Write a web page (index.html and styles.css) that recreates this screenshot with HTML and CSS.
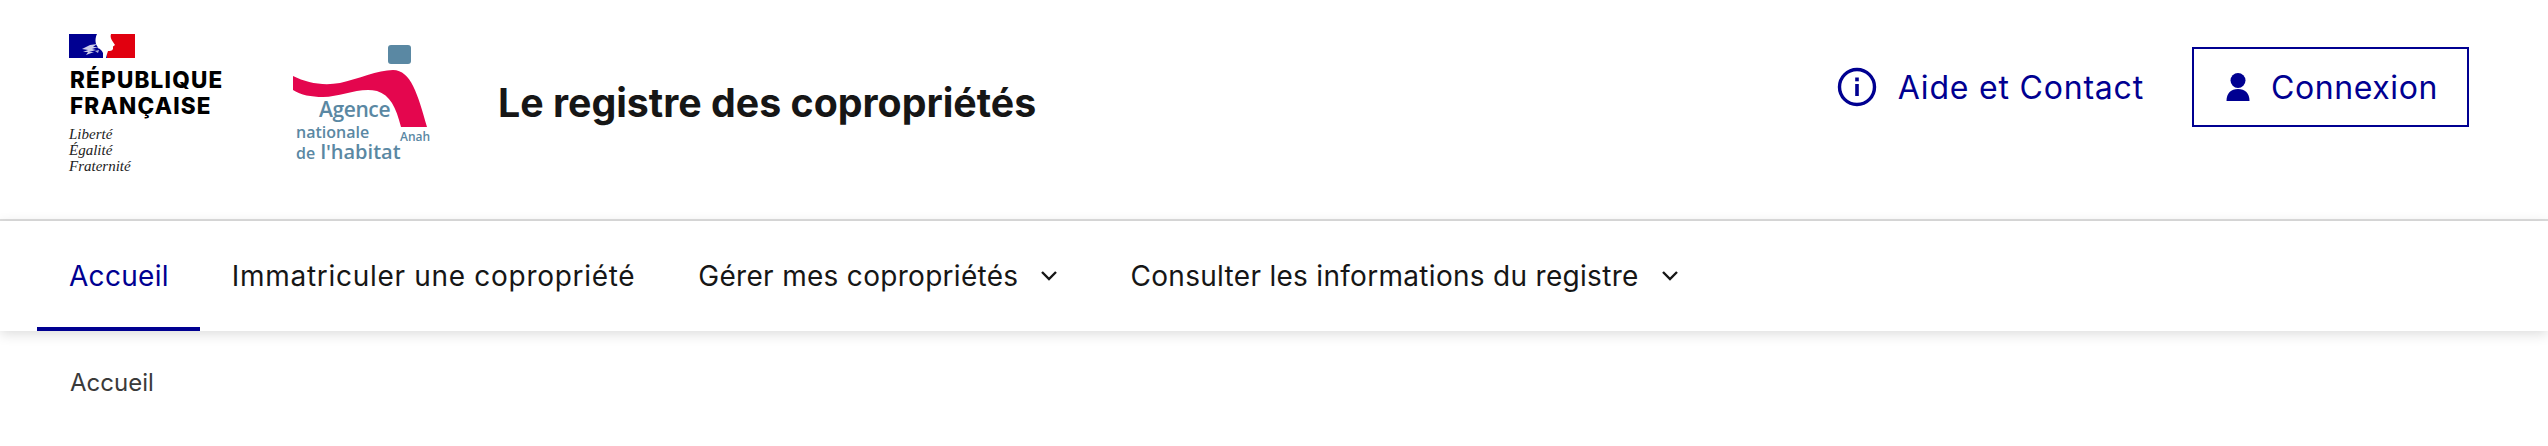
FILE: index.html
```html
<!DOCTYPE html>
<html lang="fr">
<head>
    <meta charset="UTF-8">
    <meta name="viewport" content="width=device-width, initial-scale=1.0">
    <title>Le registre des copropriétés</title>
    <link rel="stylesheet" href="styles.css">
</head>
<body>
    <header class="header">
        <div class="brand">
            <div class="gov-logo">
                <svg class="flag" viewBox="0 0 66 24" width="66" height="24" aria-hidden="true">
                    <rect width="38" height="24" fill="#000091"/>
                    <rect x="38" width="28" height="24" fill="#e1000f"/>
                    <path d="M28 0H42C41 3 42 5 44 8L46 11L44 12.500L44 15C43 17 41 17 39 17L38 20L37 24H34L34 19C33 16 30 15 28 12C26 9 26 4 28 0Z" fill="#fff"/>
                    <path d="M13 15L21 11L28 10L24 13L29 13L23 15L27 16L20 18L25 18L17 21L19 18L14 18L19 16Z" fill="#fff" opacity=".8"/>
                    <path d="M28 13L31 12L30 15ZM26 17L30 16L29 19Z" fill="#fff" opacity=".7"/>
                </svg>
                <div class="gov-name">RÉPUBLIQUE<br>FRANÇAISE</div>
                <div class="gov-motto">Liberté<br>Égalité<br>Fraternité</div>
            </div>
            <div class="anah-logo">
                <svg class="anah-shape" viewBox="0 0 136 108" width="136" height="108" aria-hidden="true">
                    <rect x="95" y="0" width="23" height="19" rx="3" fill="#5a88a3"/>
                    <path d="M0 31C14 38 30 41 47 38C65 34 85 25 100 25C118 25 125 50 134 82L108 82C103 62 97 50 84 46C66 42 48 52 30 52C18 52 8 50 0 45Z" fill="#e4064e"/>
                </svg>
                <span class="anah-agence">Agence</span>
                <span class="anah-nationale">nationale</span>
                <span class="anah-habitat"><small>de</small> l'habitat</span>
                <span class="anah-short">Anah</span>
            </div>
            <div class="site-title">Le registre des copropriétés</div>
        </div>
        <div class="tools">
            <a class="tool-link" href="#">
                <svg viewBox="0 0 40 40" width="40" height="40" aria-hidden="true">
                    <circle cx="20" cy="20" r="17.5" fill="none" stroke="#000091" stroke-width="3.4"/>
                    <rect x="18.200" y="10.500" width="3.600" height="3.800" fill="#000091"/>
                    <rect x="18.200" y="17" width="3.600" height="12" fill="#000091"/>
                </svg>
                <span>Aide et Contact</span>
            </a>
            <a class="login-btn" href="#">
                <svg viewBox="0 0 24 28" width="24" height="28" aria-hidden="true">
                    <circle cx="12" cy="7.500" r="7.500" fill="#000091"/>
                    <path d="M0.500 28C0.500 20 5 16 12 16S23.500 20 23.500 28Z" fill="#000091"/>
                </svg>
                <span>Connexion</span>
            </a>
        </div>
    </header>

    <nav class="main-nav">
        <a class="nav-item active" href="#">Accueil</a>
        <a class="nav-item nav-item-wide" href="#">Immatriculer une copropriété</a>
        <a class="nav-item has-menu" href="#">Gérer mes copropriétés
            <svg class="chevron" viewBox="0 0 18 12" width="18" height="12" aria-hidden="true"><path d="M2 2l7 7 7-7" fill="none" stroke="#161616" stroke-width="2.400"/></svg>
        </a>
        <a class="nav-item has-menu" href="#">Consulter les informations du registre
            <svg class="chevron" viewBox="0 0 18 12" width="18" height="12" aria-hidden="true"><path d="M2 2l7 7 7-7" fill="none" stroke="#161616" stroke-width="2.400"/></svg>
        </a>
    </nav>

    <div class="breadcrumb">Accueil</div>
</body>
</html>
```
FILE: styles.css
```css
body {
    margin: 0;
    font-family: Inter, "Noto Sans", sans-serif;
    background-color: #ffffff;
    color: #161616;
}
a {
    text-decoration: none;
    color: inherit;
}
.header {
    display: flex;
    justify-content: space-between;
    align-items: flex-start;
    box-sizing: border-box;
    height: 221px;
    padding: 34px 79px 0 69px;
    border-bottom: 2px solid #dddddd;
}
.brand {
    display: flex;
    align-items: flex-start;
}
.gov-logo {
    width: 224px;
}
.flag {
    display: block;
}
.gov-name {
    margin-top: 9px;
    padding-left: 1px;
    font-weight: 800;
    font-size: 22.500px;
    line-height: 26px;
    letter-spacing: 1.2px;
    color: #000000;
}
.gov-motto {
    margin-top: 7px;
    font-family: "Liberation Serif", serif;
    font-style: italic;
    font-size: 15px;
    line-height: 16px;
    color: #222222;
}
.anah-logo {
    position: relative;
    width: 136px;
    height: 128px;
    margin-top: 11px;
    color: #5a88a3;
    font-family: "Open Sans", sans-serif;
    font-weight: 600;
}
.anah-shape {
    display: block;
}
.anah-logo span {
    position: absolute;
    white-space: nowrap;
}
.anah-agence {
    left: 26px;
    top: 50px;
    font-size: 21px;
    line-height: 28px;
    letter-spacing: -0.4px;
}
.anah-nationale {
    left: 3px;
    top: 76px;
    font-size: 16px;
    line-height: 22px;
}
.anah-habitat {
    left: 3px;
    top: 93px;
    font-size: 20px;
    line-height: 28px;
}
.anah-habitat small {
    font-size: 16px;
}
.anah-short {
    left: 107px;
    top: 84px;
    font-size: 12px;
    line-height: 16px;
}
.site-title {
    margin-left: 69px;
    margin-top: 45px;
    font-size: 39.300px;
    line-height: 48px;
    font-weight: 700;
    color: #161616;
}
.tools {
    display: flex;
    align-items: center;
    margin-top: 13px;
    color: #000091;
    font-size: 32px;
    letter-spacing: 0.8px;
}
.tool-link {
    display: flex;
    align-items: center;
    gap: 21px;
    margin-right: 48px;
}
.login-btn {
    display: flex;
    align-items: center;
    gap: 21px;
    height: 76px;
    padding: 0 29px 0 32px;
    border: 2px solid #000091;
    letter-spacing: 0.6px;
}
.main-nav {
    position: relative;
    display: flex;
    height: 110px;
    padding-left: 37px;
    box-shadow: 0 3px 12px rgba(0, 0, 0, 0.14);
}
.nav-item {
    display: flex;
    align-items: center;
    gap: 22px;
    padding: 0 32px;
    font-size: 28px;
    letter-spacing: 0.3px;
    color: #161616;
}
.nav-item-wide {
    padding-right: 31px;
    letter-spacing: 0.7px;
}
.has-menu {
    padding-right: 40px;
}
.nav-item.active {
    color: #000091;
    border-bottom: 4px solid #000091;
    padding: 4px 31px 0 32px;
}
.breadcrumb {
    padding: 38px 0 0 70px;
    font-size: 24px;
    line-height: 28px;
    color: #3a3a3a;
}
```
